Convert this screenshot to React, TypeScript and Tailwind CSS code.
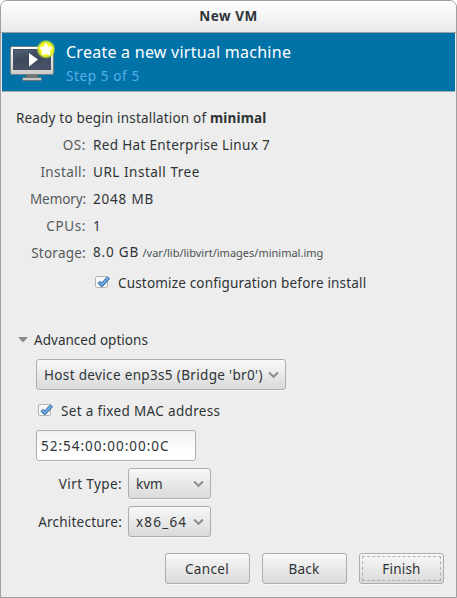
import type { ReactNode } from 'react';

const raised =
  'flex items-center rounded-[3px] border border-[#adadad] bg-linear-to-b from-[#f8f8f8] to-[#dadada] shadow-[0_1px_0_#f7f7f7]';

function Monitor() {
  return (
    <svg width="48" height="44" viewBox="0 0 48 44" className="block">
      <defs>
        <linearGradient id="frame" x1="0" y1="0" x2="0" y2="1">
          <stop offset="0" stopColor="#ffffff" />
          <stop offset="1" stopColor="#c9c9c9" />
        </linearGradient>
        <linearGradient id="screen" x1="0" y1="0" x2="0.4" y2="1">
          <stop offset="0" stopColor="#56657a" />
          <stop offset="0.5" stopColor="#3c4759" />
          <stop offset="1" stopColor="#475266" />
        </linearGradient>
        <radialGradient id="glow">
          <stop offset="0.55" stopColor="#fcfc28" />
          <stop offset="0.78" stopColor="#dcea24" stopOpacity="0.9" />
          <stop offset="1" stopColor="#8ccb45" stopOpacity="0" />
        </radialGradient>
      </defs>
      <path d="M18 36h12v4H18z" fill="#717675" />
      <rect x="14.5" y="39.5" width="19" height="3" rx="1" fill="#c5c5c5" stroke="#6f7373" />
      <rect x="2.5" y="8.5" width="43" height="28" rx="1.5" fill="url(#frame)" stroke="#777c7d" />
      <rect x="5.5" y="11.5" width="37" height="20" fill="url(#screen)" stroke="#465062" />
      <path d="M21 15v13.5l9-7z" fill="#fff" />
      <circle cx="38" cy="11.3" r="9.8" fill="url(#glow)" />
      <path d="M38 5.2l1.9 3.9 4.3.6-3.1 3 .8 4.3-3.9-2-3.9 2 .8-4.3-3.1-3 4.3-.6z" fill="#fff" stroke="#fff" strokeLinejoin="round" />
    </svg>
  );
}

function Check() {
  return (
    <svg width="16" height="16" viewBox="0 0 16 16" className="block shrink-0">
      <rect x="0.5" y="1.5" width="12" height="11" rx="1.5" fill="#f8f8f8" stroke="#b3b5ae" />
      <path d="M3.7 7l3.1 3L13.7 2.5" fill="none" stroke="#2a65a9" strokeWidth="3.7" strokeLinejoin="round" />
      <path d="M4 7.2l2.8 2.7L13.4 2.8" fill="none" stroke="#74abe2" strokeWidth="2" strokeLinejoin="round" />
    </svg>
  );
}

function Chevron() {
  return (
    <svg width="11" height="8" viewBox="0 0 11 8" className="block shrink-0">
      <path d="M1 1.5l4.5 4.3L10 1.5" fill="none" stroke="#8c8e8b" strokeWidth="2" />
    </svg>
  );
}

function Row({ label, spacing, children }: { label: string; spacing: string; children: ReactNode }) {
  return (
    <div className="flex h-[27px] items-center">
      <span className={`w-[85px] text-right text-[#555a5b] ${spacing}`}>{label}</span>
      <span className="ml-[7px] text-[#2e3436]">{children}</span>
    </div>
  );
}

export default function App() {
  return (
    <div className="flex h-[598px] w-[457px] flex-col overflow-hidden rounded-t-[7px] border border-[#a0a0a0] bg-[#ededed] font-['Noto_Sans',sans-serif] text-[13.5px] leading-[20px] whitespace-nowrap text-[#2e3436]">
      <header className="flex h-[32px] shrink-0 items-center justify-center border-b border-[#a0a0a0] bg-linear-to-b from-white to-[#e9e9e9] pb-[2px] text-[13.5px] font-bold">
        <span className="tracking-[0.5px]">New VM</span>
      </header>
      <section className="mx-px flex h-[59px] shrink-0 border-b border-[#a7b0b5] bg-[#0072a8]">
        <div className="ml-[6px] mt-[5px]"><Monitor /></div>
        <div className="ml-[10px] pt-[7px]">
          <div className="h-[24px] text-[16px] leading-[24px] tracking-[0.25px] text-white">Create a new virtual machine</div>
          <div className="h-[24px] text-[13.5px] leading-[24px] tracking-[0.62px] text-[#59aee4]">Step 5 of 5</div>
        </div>
      </section>
      <main className="flex flex-col pt-[12px]">
        <div className="flex h-[27px] items-center pl-[15px]">
          <span className="tracking-[0.18px]">Ready to begin installation of <b>minimal</b></span>
        </div>
        <Row label="OS:" spacing="tracking-[0.6px]"><span className="tracking-[0.34px]">Red Hat Enterprise Linux 7</span></Row>
        <Row label="Install:" spacing="tracking-[0.4px]"><span className="tracking-[0.52px]">URL Install Tree</span></Row>
        <Row label="Memory:" spacing="tracking-[-0.1px]"><span className="tracking-[0.8px]">2048 MB</span></Row>
        <Row label="CPUs:" spacing="tracking-[0.6px]">1</Row>
        <Row label="Storage:" spacing="tracking-[0.25px]">
          <span className="tracking-[0.8px]">8.0 GB</span> <span className="text-[11px] text-[#4b5051]">/var/lib/libvirt/images/minimal.img</span>
        </Row>
        <label className="mt-[7px] flex h-[20px] items-center pl-[94px]">
          <Check />
          <span className="ml-[7px] tracking-[0.17px]">Customize configuration before install</span>
        </label>
        <div className="mt-[37px] flex h-[20px] items-center pl-[17px]">
          <svg width="10" height="6" viewBox="0 0 10 6" className="block"><path d="M0 0h10L5 5.5z" fill="#888a85" /></svg>
          <span className="ml-[6px] tracking-[0.03px]">Advanced options</span>
        </div>
        <div className="mt-[9px] flex flex-col items-start pl-[35px]">
          <button className={`${raised} h-[31px] w-[250px] justify-between pl-[7px] pr-[6px]`}>
            <span className="tracking-[0.34px]">Host device enp3s5 (Bridge 'br0')</span>
            <Chevron />
          </button>
          <label className="mt-[11px] flex h-[20px] items-center pl-[2px]">
            <Check />
            <span className="ml-[7px] tracking-[0.34px]">Set a fixed MAC address</span>
          </label>
          <div className="mt-[9px] flex h-[31px] w-[160px] items-center rounded-[3px] border border-[#adadad] bg-linear-to-b from-[#f2f2f2] to-white to-70% pl-[4px] shadow-[0_1px_0_#f7f7f7]">
            <span className="tracking-[1px]">52:54:00:00:00:0C</span>
          </div>
        </div>
        <div className="mt-[7px] flex items-center">
          <span className="w-[121px] text-right tracking-[0.4px]">Virt Type:</span>
          <button className={`${raised} ml-[6px] h-[31px] w-[83px] justify-between pl-[7px] pr-[6px]`}><span>kvm</span><Chevron /></button>
        </div>
        <div className="mt-[7px] flex items-center">
          <span className="w-[121px] text-right tracking-[0.22px]">Architecture:</span>
          <button className={`${raised} ml-[6px] h-[31px] w-[83px] justify-between pl-[7px] pr-[6px]`}><span className="tracking-[1.2px]">x86_64</span><Chevron /></button>
        </div>
      </main>
      <footer className="mt-[16px] flex gap-[12px] pl-[164px]">
        <button className={`${raised} h-[31px] w-[85px] justify-center pr-px`}><span className="tracking-[0.35px]">Cancel</span></button>
        <button className={`${raised} h-[31px] w-[85px] justify-center pr-px`}><span className="tracking-[0.2px]">Back</span></button>
        <button className={`${raised} h-[31px] w-[85px] p-[2px]`}>
          <span className="flex h-full w-full items-center justify-center border border-dashed border-[#b0b0b0] tracking-[0.2px]">Finish</span>
        </button>
      </footer>
    </div>
  );
}
